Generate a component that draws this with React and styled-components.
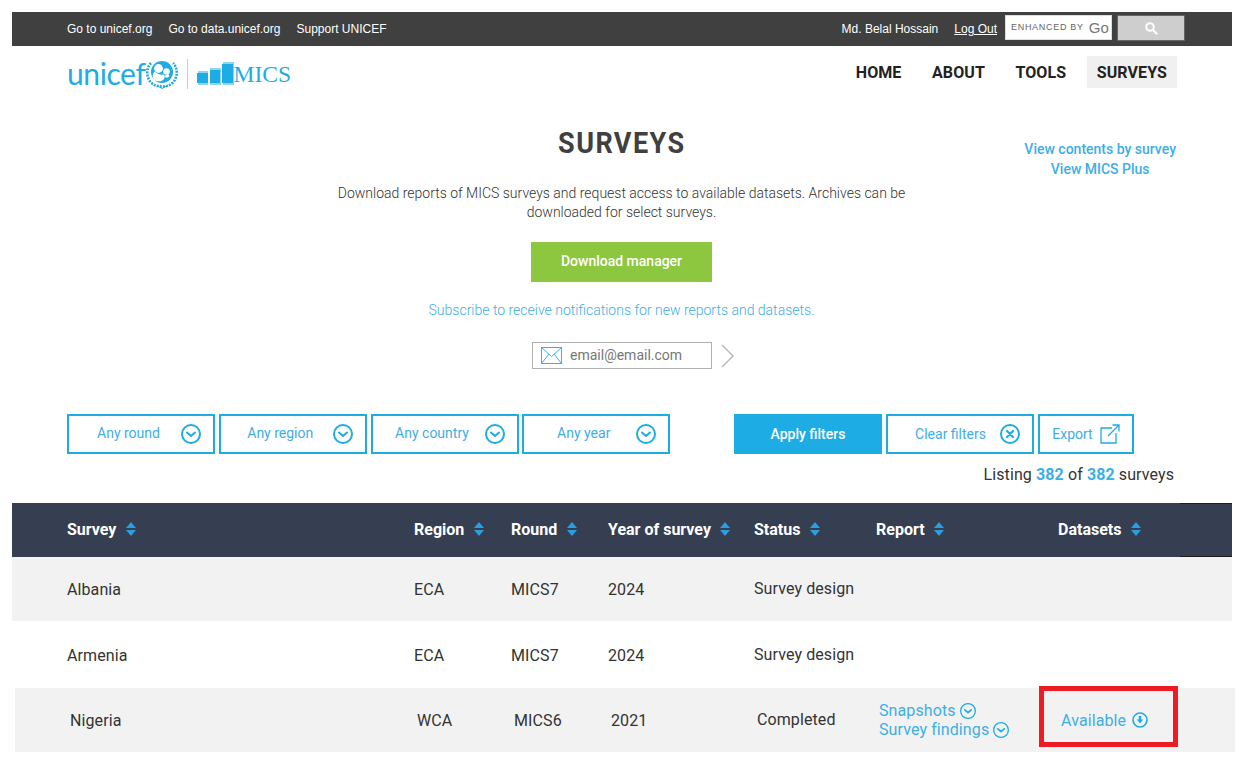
import React from "react";
import styled, { createGlobalStyle } from "styled-components";

const BLUE = "#1dace4";
const LINK = "#3eaee6";

const Global = createGlobalStyle`
  html, body { margin: 0; padding: 0; background: #fff; }
  body { font-family: Roboto, "Liberation Sans", sans-serif; overflow: hidden; }
  * { box-sizing: border-box; }
`;

const Page = styled.div`
  padding: 12px 12px 11px 12px;
  width: 1244px;
  height: 763px;
`;

/* top bar */
const TopBar = styled.div`
  display: flex;
  align-items: center;
  justify-content: space-between;
  height: 34px;
  padding: 0 47px 0 55px;
  background: #404040;
  font-family: "Liberation Sans", Arial, sans-serif;
  font-size: 12px;
  color: #fff;
`;
const TopLinks = styled.div`
  display: flex;
  align-items: center;
  gap: ${(p) => p.$gap}px;
`;
const TopLink = styled.span`
  text-decoration: ${(p) => (p.$underline ? "underline" : "none")};
`;
const SearchBox = styled.div`
  display: flex;
  align-items: center;
  gap: 5px;
  margin-left: -8px;
`;
const SearchInput = styled.div`
  display: flex;
  align-items: center;
  gap: 5px;
  width: 107px;
  height: 25px;
  margin-top: -4px;
  padding-left: 5px;
  white-space: nowrap;
  background: #fff;
  border: 1px solid #ddd;
  color: #666;
  font-size: 9px;
  letter-spacing: 0.7px;
`;
const GoogleMark = styled.span`
  font-size: 15px;
  letter-spacing: 0;
  color: #777;
`;
const SearchButton = styled.div`
  display: flex;
  align-items: center;
  justify-content: center;
  width: 68px;
  height: 26px;
  margin-top: -2px;
  background: #cecece;
  border: 1px solid #666;
  border-radius: 1px;
`;

/* logo and nav */
const Header = styled.div`
  display: flex;
  align-items: flex-start;
  justify-content: space-between;
  height: 54px;
  padding: 10px 55px;
`;
const Logo = styled.div`
  display: flex;
  align-items: center;
  height: 30px;
  margin-top: 3px;
  color: ${BLUE};
`;
const LogoWord = styled.span`
  font-family: Lato, "Liberation Sans", sans-serif;
  font-weight: 400;
  font-size: 30px;
  letter-spacing: -0.4px;
  line-height: 30px;
  margin-top: -2px;
`;
const LogoDivider = styled.span`
  width: 1px;
  height: 30px;
  margin: 0 9px;
  background: #ccc;
`;
const LogoMics = styled.span`
  font-family: "Liberation Serif", serif;
  font-size: 23.5px;
  line-height: 30px;
  margin-top: -1px;
`;
const Nav = styled.nav`
  display: flex;
  align-items: center;
  gap: 10.5px;
`;
const NavItem = styled.span`
  padding: 0 10px;
  height: 32px;
  line-height: 33px;
  font-weight: 700;
  font-size: 16px;
  letter-spacing: 0.1px;
  color: #222;
  background: ${(p) => (p.$active ? "#f0f0f0" : "transparent")};
`;

/* hero */
const Hero = styled.section`
  display: grid;
  grid-template-columns: 1fr 600px 1fr;
  height: 314px;
  padding-right: 1px;
`;
const HeroMain = styled.div`
  display: flex;
  flex-direction: column;
  align-items: center;
  grid-column: 2;
`;
const Title = styled.h1`
  margin: 24px 0 0;
  font-size: 30px;
  line-height: 38px;
  font-weight: 700;
  letter-spacing: 1.6px;
  color: #404040;
  transform: scaleX(0.9);
`;
const Lead = styled.p`
  margin: 22px 0 0;
  width: 590px;
  text-align: center;
  font-size: 14px;
  line-height: 19px;
  font-weight: 300;
  color: #333;
`;
const PrimaryButton = styled.div`
  display: flex;
  align-items: center;
  justify-content: center;
  width: 181px;
  height: 40px;
  margin-top: 20px;
  padding-bottom: 2px;
  background: #8dc63f;
  color: #fff;
  font-size: 14px;
  font-weight: 500;
`;
const Subscribe = styled.p`
  margin: 19px 0 0;
  font-size: 14px;
  line-height: 18px;
  font-weight: 300;
  color: ${LINK};
`;
const EmailRow = styled.div`
  display: flex;
  align-items: center;
  gap: 9px;
  margin: 23px 0 0 24px;
`;
const EmailField = styled.div`
  display: flex;
  align-items: center;
  gap: 8px;
  width: 180px;
  height: 27px;
  padding: 0 0 1px 8px;
  border: 1px solid #b0b0b0;
  font-size: 14px;
  color: #777;
`;
const SideLinks = styled.div`
  display: flex;
  flex-direction: column;
  align-items: center;
  justify-self: end;
  margin: 39px 55px 0 0;
  font-size: 14px;
  line-height: 20px;
  font-weight: 500;
  color: ${LINK};
`;

/* filters */
const Filters = styled.div`
  display: flex;
  justify-content: space-between;
  padding: 0 98px 0 55px;
`;
const ButtonGroup = styled.div`
  display: flex;
  gap: ${(p) => p.$gap}px;
`;
const ActionButton = styled.div`
  display: flex;
  align-items: center;
  justify-content: ${(p) => (p.$center ? "center" : "flex-end")};
  gap: ${(p) => p.$gap || 14}px;
  width: ${(p) => p.$width || 148}px;
  height: 40px;
  padding: ${(p) => (p.$center ? "0" : "0 12px")};
  border: 2px solid ${BLUE};
  background: ${(p) => (p.$solid ? BLUE : "#fff")};
  color: ${(p) => (p.$solid ? "#fff" : LINK)};
  font-size: 14px;
  font-weight: ${(p) => (p.$solid ? 500 : 400)};
`;
const Dropdown = styled.div`
  position: relative;
  width: 148px;
  height: 40px;
  padding-right: 25px;
  border: 2px solid ${BLUE};
  text-align: center;
  color: ${LINK};
  font-size: 14px;
  line-height: 34px;
`;
const DropdownIcon = styled.span`
  position: absolute;
  right: 12px;
  top: 8px;
  display: flex;
`;
const Listing = styled.div`
  height: 49px;
  padding: 11px 58px 0 0;
  text-align: right;
  font-size: 16px;
  line-height: 19px;
  letter-spacing: 0.1px;
  color: #333;
  b { font-weight: 700; color: ${LINK}; }
`;

/* table */
const cols = "347px 97px 97px 146px 122px 182px 122px 1fr";

const HeadRow = styled.div`
  display: grid;
  grid-template-columns: ${cols};
  align-items: center;
  height: 54px;
  padding-left: 55px;
  background: #353f51;
  color: #fff;
  font-size: 16px;
  font-weight: 700;
`;
const HeadCell = styled.div`
  display: flex;
  align-items: center;
  gap: 9.5px;
  margin-top: -2px;
`;
const HeadEnd = styled.div`
  align-self: stretch;
  border-top: 1px solid #1c1c1c;
  border-bottom: 1px solid #1c1c1c;
`;
const Row = styled.div`
  position: relative;
  display: grid;
  grid-template-columns: ${cols};
  align-items: center;
  height: ${(p) => p.$height}px;
  padding-left: 55px;
  padding-top: ${(p) => (p.$height > 64 ? 1 : 0)}px;
  background: ${(p) => (p.$shade ? "#f2f2f2" : "#fff")};
  margin-left: ${(p) => (p.$shift ? 3 : 0)}px;
  margin-right: ${(p) => (p.$shift ? -3 : 0)}px;
  font-size: 16px;
  letter-spacing: 0.1px;
  color: #333;
`;
const Cell = styled.div`
  line-height: 19px;
`;
const StatusCell = styled(Cell)`
  margin-top: -2px;
`;
const LinkLine = styled.div`
  display: flex;
  align-items: center;
  gap: ${(p) => p.$gap}px;
  color: ${LINK};
  font-size: 16px;
  font-weight: 400;
  line-height: 19px;
`;
const Highlight = styled.div`
  position: absolute;
  left: 1024px;
  top: -2px;
  width: 139px;
  height: 61px;
  border: 5px solid #ed1c24;
`;

const CircleIcon = ({ size = 20, width = 2, children }) => (
  <svg width={size} height={size} viewBox="0 0 20 20" fill="none" stroke={BLUE} strokeWidth={width} strokeLinecap="round" strokeLinejoin="round">
    <circle cx="10" cy="10" r={10 - width / 2} />
    {children}
  </svg>
);
const Chevron = ({ size, width }) => (
  <CircleIcon size={size} width={width}>
    <path d="M6 8.5l4 3.5 4-3.5" strokeWidth="2" />
  </CircleIcon>
);
const CrossIcon = () => (
  <CircleIcon>
    <path d="M7 7l6 6M13 7l-6 6" strokeWidth="2.2" />
  </CircleIcon>
);
const DownIcon = () => (
  <svg width="16" height="16" viewBox="0 0 16 16">
    <circle cx="8" cy="8" r="7" fill="none" stroke={BLUE} strokeWidth="1.6" />
    <path d="M6.8 4h2.4v3.6h2L8 11.6 4.8 7.6h2z" fill={BLUE} />
  </svg>
);
const SortIcon = () => (
  <svg width="10" height="14" viewBox="0 0 10 14" fill="#2a9fe0">
    <path d="M5 0l5 6H0zM5 14L0 8h10z" />
  </svg>
);
const MailIcon = () => (
  <svg width="21" height="17" viewBox="0 0 21 17" fill="none" stroke="#36b4ea" strokeWidth="1">
    <rect x="0.5" y="0.5" width="20" height="16" />
    <path d="M0.5 0.5l10 9 10-9M0.5 16.5l7.5-9.5M20.5 16.5l-7.5-9.5" />
  </svg>
);
const ArrowRight = () => (
  <svg width="14" height="24" viewBox="0 0 14 24" fill="none" stroke="#b5b5b5" strokeWidth="1.4">
    <path d="M1 1l11 11L1 23" />
  </svg>
);
const ExportIcon = () => (
  <svg width="20" height="20" viewBox="0 0 20 20" fill="none" stroke={BLUE} strokeWidth="1.3">
    <path d="M12 4H1v15h15V9M8 12L19 1M12.5 1H19v6.5" />
  </svg>
);
const SearchGlyph = () => (
  <svg width="13" height="13" viewBox="0 0 13 13" fill="none" stroke="#fff" strokeWidth="2">
    <circle cx="5" cy="5" r="3.8" />
    <path d="M8 8l4.2 4.2" />
  </svg>
);
const Emblem = () => (
  <svg width="32" height="30" viewBox="0 0 32 30">
    {/* wreath */}
    <path d="M5 4C0 9 0 18 5 23.500c3 3 7 4 11 4s8-1 11-4c5-5.500 5-14.500 0-19.500" fill="none" stroke={BLUE} strokeWidth="2.6" strokeDasharray="2 1.100" />
    <path d="M11 26.500l5 3 5-3" fill="none" stroke={BLUE} strokeWidth="1" />
    {/* globe with mother and child */}
    <circle cx="16" cy="13" r="11" fill={BLUE} />
    <circle cx="12.500" cy="9.500" r="4.400" fill="#fff" />
    <path d="M8.500 12.500c-2.500 3-2.500 7 .5 9 3.500 1.500 7 1 9-1.500 1-2 .5-3.500-.5-4.500-3 .5-6.500-.5-9-3z" fill="#fff" />
    <circle cx="20.500" cy="12.500" r="3.300" fill="#fff" />
    <path d="M18 16.500c1 2.500 3.500 3 5.500.5-.5-1-1-1.500-1.500-2-1 1-2.500 1.500-4 1.500z" fill="#fff" />
  </svg>
);
const Bars = () => (
  <svg width="37" height="26" viewBox="0 0 37 26">
    <g fill="#8fd3f1">
      <rect x="1" y="10" width="10" height="14" />
      <rect x="13" y="7" width="11" height="17" />
      <rect x="26" y="1" width="11" height="23" />
    </g>
    <g fill={BLUE}>
      <rect x="0" y="12" width="11" height="10" />
      <rect x="13" y="9" width="10" height="13" />
      <rect x="25" y="3" width="11" height="19" />
    </g>
  </svg>
);

const filters = ["Any round", "Any region", "Any country", "Any year"];
const heads = ["Survey", "Region", "Round", "Year of survey", "Status", "Report", "Datasets"];
const rows = [
  { name: "Albania", region: "ECA", round: "MICS7", year: "2024", status: "Survey design", height: 64, shade: true },
  { name: "Armenia", region: "ECA", round: "MICS7", year: "2024", status: "Survey design", height: 67 },
];

export default function App() {
  return (
    <Page>
      <Global />
      <TopBar>
        <TopLinks $gap={16}>
          <TopLink>Go to unicef.org</TopLink>
          <TopLink>Go to data.unicef.org</TopLink>
          <TopLink>Support UNICEF</TopLink>
        </TopLinks>
        <TopLinks $gap={16}>
          <TopLink>Md. Belal Hossain</TopLink>
          <TopLink $underline>Log Out</TopLink>
          <SearchBox>
            <SearchInput>
              ENHANCED BY <GoogleMark>Go</GoogleMark>
            </SearchInput>
            <SearchButton>
              <SearchGlyph />
            </SearchButton>
          </SearchBox>
        </TopLinks>
      </TopBar>

      <Header>
        <Logo>
          <LogoWord>unicef</LogoWord>
          <Emblem />
          <LogoDivider />
          <Bars />
          <LogoMics>MICS</LogoMics>
        </Logo>
        <Nav>
          <NavItem>HOME</NavItem>
          <NavItem>ABOUT</NavItem>
          <NavItem>TOOLS</NavItem>
          <NavItem $active>SURVEYS</NavItem>
        </Nav>
      </Header>

      <Hero>
        <HeroMain>
          <Title>SURVEYS</Title>
          <Lead>
            Download reports of MICS surveys and request access to available datasets. Archives can be downloaded for
            select surveys.
          </Lead>
          <PrimaryButton>Download manager</PrimaryButton>
          <Subscribe>Subscribe to receive notifications for new reports and datasets.</Subscribe>
          <EmailRow>
            <EmailField>
              <MailIcon />
              email@email.com
            </EmailField>
            <ArrowRight />
          </EmailRow>
        </HeroMain>
        <SideLinks>
          <span>View contents by survey</span>
          <span>View MICS Plus</span>
        </SideLinks>
      </Hero>

      <Filters>
        <ButtonGroup $gap={3.75}>
          {filters.map((f) => (
            <Dropdown key={f}>
              {f}
              <DropdownIcon>
                <Chevron />
              </DropdownIcon>
            </Dropdown>
          ))}
        </ButtonGroup>
        <ButtonGroup $gap={4}>
          <ActionButton $solid $center>Apply filters</ActionButton>
          <ActionButton>
            Clear filters
            <CrossIcon />
          </ActionButton>
          <ActionButton $width={96} $center $gap={7}>
            Export
            <ExportIcon />
          </ActionButton>
        </ButtonGroup>
      </Filters>
      <Listing>
        Listing <b>382</b> of <b>382</b> surveys
      </Listing>

      <HeadRow>
        {heads.map((h) => (
          <HeadCell key={h}>
            {h}
            <SortIcon />
          </HeadCell>
        ))}
        <HeadEnd />
      </HeadRow>
      {rows.map((r) => (
        <Row key={r.name} $height={r.height} $shade={r.shade}>
          <Cell>{r.name}</Cell>
          <Cell>{r.region}</Cell>
          <Cell>{r.round}</Cell>
          <Cell>{r.year}</Cell>
          <StatusCell>{r.status}</StatusCell>
        </Row>
      ))}
      <Row $height={64} $shade $shift>
        <Cell>Nigeria</Cell>
        <Cell>WCA</Cell>
        <Cell>MICS6</Cell>
        <Cell>2021</Cell>
        <StatusCell>Completed</StatusCell>
        <Cell>
          <LinkLine $gap={4}>
            Snapshots <Chevron size={16} width={1.6} />
          </LinkLine>
          <LinkLine $gap={4}>
            Survey findings <Chevron size={16} width={1.6} />
          </LinkLine>
        </Cell>
        <LinkLine $gap={6}>
          Available <DownIcon />
        </LinkLine>
        <Highlight />
      </Row>
    </Page>
  );
}
